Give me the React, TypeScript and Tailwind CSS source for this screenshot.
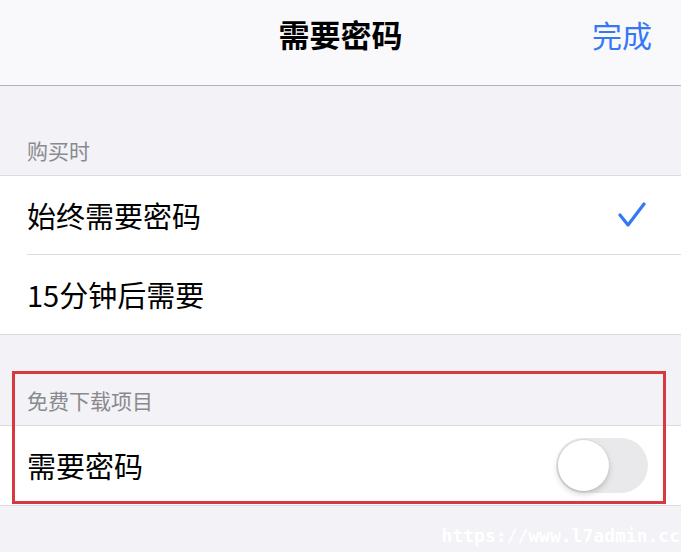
const font = { fontFamily: '"Noto Sans CJK SC", "Noto Sans", sans-serif' };

function SectionHeader({ label, tall }: { label: string; tall?: boolean }) {
  return (
    <div
      className={
        'flex items-end pb-[11px] pl-[27px] text-[21px] leading-[28px] text-[#8a8a8e] ' +
        (tall ? 'h-[90px]' : 'h-[89px]')
      }
    >
      {label}
    </div>
  );
}

function Row({
  label,
  last,
  children
}: {
  label: string;
  last?: boolean;
  children?: React.ReactNode;
}) {
  return (
    <div className="flex h-[79px] items-stretch pl-[27px]">
      <div
        className={
          'flex flex-1 items-center justify-between pr-[34px] ' +
          (last ? '' : 'border-b border-[#dcdce0]')
        }
      >
        <span className="text-[29px] leading-none text-black">{label}</span>
        {children}
      </div>
    </div>
  );
}

function Toggle() {
  return (
    <div className="flex h-[55px] w-[92px] items-center rounded-full bg-[#e9e9eb] p-[2px]">
      <div className="h-[51px] w-[51px] rounded-full bg-white shadow-[0_3px_6px_rgba(0,0,0,0.18),0_0_0_1px_rgba(0,0,0,0.04)]" />
    </div>
  );
}

export default function App() {
  return (
    <div
      className="relative h-[552px] w-[681px] overflow-hidden bg-[#f2f2f7]"
      style={font}
    >
      <div className="relative flex h-[86px] items-center justify-center border-b border-[#b4b4b8] bg-[#f9f9fb] pb-[16px]">
        <span className="text-[31px] font-bold text-black">需要密码</span>
        <span className="absolute right-[29px] text-[30px] text-[#3478f6]">
          完成
        </span>
      </div>

      <SectionHeader label="购买时" />
      <div className="border-y border-[#dcdce0] bg-white">
        <Row label="始终需要密码">
          <svg width="28" height="26" viewBox="0 0 28 26" className="mr-[1px]">
            <path
              d="M2 13 L10 23 L26 2"
              fill="none"
              stroke="#3478f6"
              strokeWidth="3.2"
              strokeLinecap="round"
              strokeLinejoin="round"
            />
          </svg>
        </Row>
        <Row label="15分钟后需要" last />
      </div>

      <div className="relative">
        <SectionHeader label="免费下载项目" tall />
        <div className="border-y border-[#dcdce0] bg-white">
          <Row label="需要密码" last>
            <span className="-mr-[1px]">
              <Toggle />
            </span>
          </Row>
        </div>
        <div className="pointer-events-none absolute left-[12px] top-[36px] h-[133px] w-[654px] border-[3px] border-[#d6393f]" />
      </div>

      <div
        className="absolute bottom-[3px] right-[1px] text-[18px] font-black text-white"
        style={{ fontFamily: '"DejaVu Sans Mono", monospace' }}
      >
        https://www.l7admin.cc
      </div>
    </div>
  );
}
